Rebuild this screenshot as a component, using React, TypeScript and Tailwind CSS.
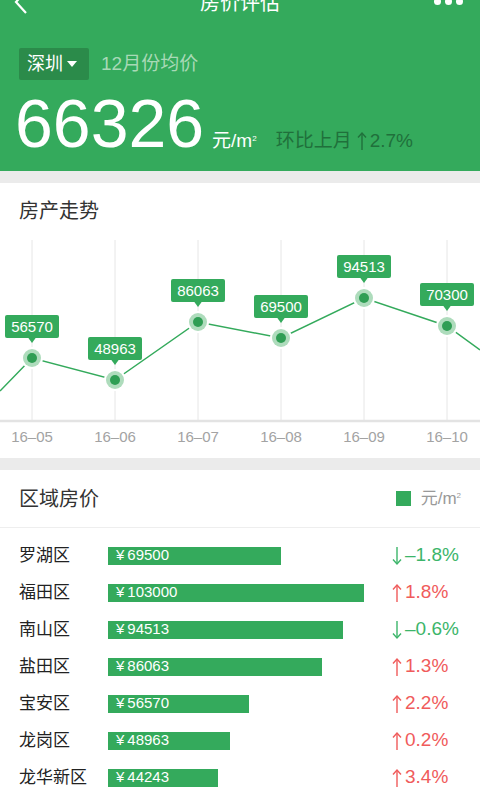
import React from 'react';

const FONT = { fontFamily: '"Liberation Sans", "Noto Sans CJK SC", sans-serif' };

const POINTS = [
  { x: 32, y: 120, v: '56570', label: '16-05' },
  { x: 115, y: 142, v: '48963', label: '16-06' },
  { x: 198, y: 84, v: '86063', label: '16-07' },
  { x: 281, y: 100, v: '69500', label: '16-08' },
  { x: 364, y: 60, v: '94513', label: '16-09' },
  { x: 447, y: 88, v: '70300', label: '16-10' },
];

const DISTRICTS = [
  { name: '罗湖区', price: 69500, change: '–1.8%', up: false },
  { name: '福田区', price: 103000, change: '1.8%', up: true },
  { name: '南山区', price: 94513, change: '–0.6%', up: false },
  { name: '盐田区', price: 86063, change: '1.3%', up: true },
  { name: '宝安区', price: 56570, change: '2.2%', up: true },
  { name: '龙岗区', price: 48963, change: '0.2%', up: true },
  { name: '龙华新区', price: 44243, change: '3.4%', up: true },
];

// thin tall arrow like the iOS glyph
function Arrow({ up, color }: { up: boolean; color: string }) {
  return (
    <svg width="10" height="20" viewBox="0 0 10 20" className="inline-block mr-[3px]">
      {up ? (
        <>
          <line x1="5" y1="2" x2="5" y2="19" stroke={color} strokeWidth="1.4" />
          <polyline points="1,6.5 5,2 9,6.5" fill="none" stroke={color} strokeWidth="1.4" />
        </>
      ) : (
        <>
          <line x1="5" y1="1" x2="5" y2="18" stroke={color} strokeWidth="1.4" />
          <polyline points="1,13.5 5,18 9,13.5" fill="none" stroke={color} strokeWidth="1.4" />
        </>
      )}
    </svg>
  );
}

function Unit({ className }: { className: string }) {
  return (
    <span className={className}>
      元/m<span className="relative -top-[6px] text-[8px]">2</span>
    </span>
  );
}

function TrendChart() {
  const line = [{ x: 0, y: 153 }, ...POINTS, { x: 480, y: 112 }];
  return (
    <svg width="480" height="220" viewBox="0 0 480 220" className="block">
      {POINTS.map((p) => (
        <line key={p.label} x1={p.x} y1={2} x2={p.x} y2={182} stroke="#e6e6e6" strokeWidth="1" />
      ))}
      <line x1="0" y1="183" x2="480" y2="183" stroke="#e3e3e3" strokeWidth="2.5" />
      <polyline
        points={line.map((p) => `${p.x},${p.y}`).join(' ')}
        fill="none"
        stroke="#34aa5c"
        strokeWidth="1.5"
      />
      {POINTS.map((p) => (
        <g key={p.v}>
          <circle cx={p.x} cy={p.y} r="11" fill="#ffffff" />
          <circle cx={p.x} cy={p.y} r="9" fill="#aedcbc" />
          <circle cx={p.x} cy={p.y} r="5" fill="#2f9e54" />
          <rect x={p.x - 27} y={p.y - 43} width="54" height="23" rx="2" fill="#34aa5c" />
          <polygon points={`${p.x - 4},${p.y - 20.5} ${p.x + 4},${p.y - 20.5} ${p.x},${p.y - 15}`} fill="#34aa5c" />
          <text x={p.x} y={p.y - 26} textAnchor="middle" fill="#ffffff" fontSize="15" style={FONT}>
            {p.v}
          </text>
          <text x={p.x} y={204} textAnchor="middle" fill="#a3a3a3" fontSize="15" style={FONT}>
            {p.label.replace('-', '–')}
          </text>
        </g>
      ))}
    </svg>
  );
}

export default function App() {
  return (
    <div className="w-[480px] h-[800px] overflow-hidden bg-[#ebebeb]" style={FONT}>
      <div className="bg-[#34aa5c] h-[171px] flex flex-col">
        <div className="relative -mt-[19px] h-[44px] flex items-center justify-center">
          <svg className="absolute left-[12px] top-[8px]" width="18" height="26" viewBox="0 0 18 26">
            <polyline points="14,2 4,13 14,24" fill="none" stroke="#ffffff" strokeWidth="2.2" />
          </svg>
          <span className="text-white text-[20px]">房价评估</span>
          <div className="absolute right-[17px] top-[17px] flex gap-[4px]">
            <span className="w-[7px] h-[7px] rounded-full bg-white" />
            <span className="w-[7px] h-[7px] rounded-full bg-white" />
            <span className="w-[7px] h-[7px] rounded-full bg-white" />
          </div>
        </div>
        <div className="pl-[19px] mt-[23px] flex items-center">
          <div className="h-[32px] w-[70px] rounded-[2px] bg-[#2b8b4a] flex items-center pl-[8px] gap-[4px]">
            <span className="text-white text-[18px] leading-none">深圳</span>
            <span className="w-0 h-0 border-l-[5px] border-r-[5px] border-t-[6px] border-l-transparent border-r-transparent border-t-white" />
          </div>
          <span className="ml-[12px] text-[19px] text-[#a8d9b6]">12月份均价</span>
        </div>
        <div className="pl-[15px] flex items-baseline leading-none mt-[9px]">
          <span className="text-white text-[68px] leading-none">66326</span>
          <Unit className="text-white text-[19px] ml-[8px]" />
          <span className="text-[#20703b] text-[19px] ml-[19px] flex items-baseline">
            环比上月
            <span className="self-center relative top-[-1px] ml-[5px]">
              <Arrow up color="#20703b" />
            </span>
            2.7%
          </span>
        </div>
      </div>

      <div className="mt-[12px] bg-white h-[275px]">
        <div className="pl-[19px] pt-[15px] h-[55px] text-[20px] text-[#333333] leading-[26px]">房产走势</div>
        <TrendChart />
      </div>

      <div className="mt-[12px] bg-white h-[330px]">
        <div className="h-[58px] pl-[19px] pr-[19px] flex items-center justify-between border-b border-[#eeeeee]">
          <span className="text-[20px] text-[#333333]">区域房价</span>
          <div className="flex items-center gap-[10px]">
            <span className="w-[15px] h-[15px] bg-[#34aa5c]" />
            <Unit className="text-[17px] text-[#999999]" />
          </div>
        </div>
        <div className="pt-[9px]">
          {DISTRICTS.map((d) => (
            <div key={d.name} className="h-[37px] flex items-center">
              <span className="w-[108px] pl-[19px] text-[17px] text-[#222222]">{d.name}</span>
              <div className="w-[284px]">
                <div
                  className="h-[18px] bg-[#34aa5c] flex items-center pl-[8px] text-white text-[15px]"
                  style={{ width: Math.round((d.price * 256) / 103000) }}
                >
                  <span className="mr-[3px]">¥</span>
                  {d.price}
                </div>
              </div>
              <span className={`text-[19px] flex items-center ${d.up ? 'text-[#f05b5b]' : 'text-[#3cb56a]'}`}>
                <Arrow up={d.up} color={d.up ? '#f05b5b' : '#3cb56a'} />
                {d.change}
              </span>
            </div>
          ))}
        </div>
      </div>
    </div>
  );
}
